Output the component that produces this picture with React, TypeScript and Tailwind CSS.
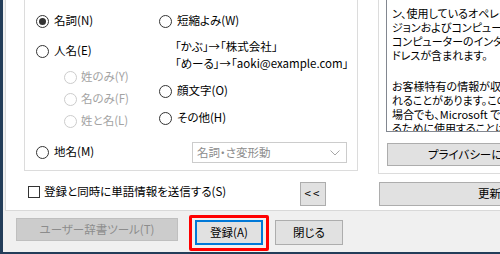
const FONT = "[font-family:'Noto_Sans_CJK_JP',sans-serif] [font-feature-settings:'palt']";

function Radio({ checked = false, disabled = false }: { checked?: boolean; disabled?: boolean }) {
  return (
    <span
      className={`flex items-center justify-center w-[13px] h-[13px] rounded-full border bg-white shrink-0 ${
        disabled ? 'border-[#cccccc]' : 'border-[#333333]'
      }`}
    >
      {checked && <span className="w-[7px] h-[7px] rounded-full bg-[#333333]" />}
    </span>
  );
}

function RadioItem({ label, checked, disabled, gap = 'gap-[5px]' }: { label: string; checked?: boolean; disabled?: boolean; gap?: string }) {
  return (
    <div className={`flex items-center h-[20px] ${gap}`}>
      <Radio checked={checked} disabled={disabled} />
      <span className={disabled ? 'text-[#a3a3a3]' : 'text-black'}>{label}</span>
    </div>
  );
}

export default function App() {
  return (
    <div className={`w-[500px] h-[254px] overflow-hidden flex flex-col bg-[#f0f0f0] text-[11.5px] leading-none ${FONT}`}>
      <div className="flex h-[252px]">
        {/* window frame */}
        <div className="w-[3px] bg-[#233d59] shrink-0" />

        <div className="flex flex-col flex-1 min-w-0">
          {/* tab page */}
          <div className="ml-[2px] h-[211px] w-[600px] bg-white border-l border-b border-[#d9d9d9] flex flex-col">
            <div className="flex items-start">
              {/* 品詞 group */}
              <div className="ml-[18px] w-[334px] h-[171px] border-x border-b border-[#dcdcdc] grid grid-cols-[134px_1fr]">
                <div className="pl-[11px] pt-[11px] flex flex-col">
                  <RadioItem label="名詞(N)" checked />
                  <div className="mt-[10px]">
                    <RadioItem label="人名(E)" />
                  </div>
                  <div className="pl-[28px] mt-[6px] flex flex-col gap-[2px]">
                    <RadioItem label="姓のみ(Y)" disabled gap="gap-[4px]" />
                    <RadioItem label="名のみ(F)" disabled gap="gap-[4px]" />
                    <RadioItem label="姓と名(L)" disabled gap="gap-[4px]" />
                  </div>
                  <div className="mt-[11px]">
                    <RadioItem label="地名(M)" />
                  </div>
                </div>
                <div className="pt-[11px] flex flex-col">
                  <RadioItem label="短縮よみ(W)" />
                  <div className="pl-[16px] mt-[7px] text-black">
                    <p className="h-[17px] flex items-center whitespace-nowrap">「かぶ」→「株式会社」</p>
                    <p className="h-[17px] flex items-center whitespace-nowrap">「めーる」→「aoki@example.com」</p>
                  </div>
                  <div className="mt-[9px]">
                    <RadioItem label="顔文字(O)" />
                  </div>
                  <div className="mt-[7px]">
                    <RadioItem label="その他(H)" />
                  </div>
                  <div className="ml-[33px] mt-[14px] w-[155px] h-[21px] border border-[#cccccc] bg-white flex items-center justify-between pl-[4px] pr-[6px]">
                    <span className="text-[#8c8c8c] whitespace-nowrap">名詞・さ変形動</span>
                    <svg width="10" height="6" viewBox="0 0 10 6" fill="none">
                      <path d="M0.5 0.5 L5 5 L9.5 0.5" stroke="#a8a8a8" strokeWidth="1" />
                    </svg>
                  </div>
                </div>
              </div>

              {/* privacy group */}
              <div className="ml-[20px] w-[200px] h-[174px] border-l border-b border-[#dcdcdc] flex flex-col">
                <div className="ml-[7px] w-[120px] h-[132px] border-l border-b border-[#828790] pl-[5px] pt-[6px] overflow-hidden leading-[14px] text-[11px] text-black whitespace-nowrap">
                  <p>ン、使用しているオペレー</p>
                  <p>ジョンおよびコンピューター</p>
                  <p>コンピューターのインターネ</p>
                  <p>ドレスが含まれます。</p>
                  <p className="mt-[17px]">お客様特有の情報が収</p>
                  <p>れることがあります。この</p>
                  <p>場合でも、Microsoft で</p>
                  <p>るために使用することは</p>
                </div>
                <button className="ml-[8px] mt-[11px] h-[23px] w-[190px] bg-[#e1e1e1] border border-[#adadad] flex items-center pl-[40px] text-black whitespace-nowrap">
                  プライバシーに関する声明
                </button>
              </div>
            </div>

            {/* send row */}
            <div className="mt-[8px] flex items-start h-[24px]">
              <div className="w-[294px] pl-[22px] h-[20px] flex items-center gap-[4px]">
                <span className="w-[12px] h-[12px] border border-[#333333] bg-white shrink-0" />
                <span className="text-black whitespace-nowrap">登録と同時に単語情報を送信する(S)</span>
              </div>
              <button className="w-[26px] h-[24px] bg-[#e1e1e1] border border-[#adadad] flex items-center justify-center text-black tracking-[2px]">
                {'<<'}
              </button>
              <button className="ml-[53px] w-[200px] h-[24px] bg-[#e1e1e1] border border-[#adadad] flex items-center pl-[98px] text-black whitespace-nowrap">
                更新(U)
              </button>
            </div>
          </div>

          {/* footer buttons */}
          <div className="flex items-start">
            <button className="ml-[13px] mt-[7px] w-[162px] h-[23px] bg-[#cccccc] border border-[#bfbfbf] flex items-center justify-center text-[#8c8c8c] whitespace-nowrap">
              ユーザー辞書ツール(T)
            </button>
            <div className="relative ml-[17px] mt-[9px]">
              <button className="w-[68px] h-[25px] bg-[#e1e1e1] border-2 border-[#0078d7] flex items-center justify-center text-black">
                登録(A)
              </button>
              <div className="absolute -left-[6px] -top-[5px] w-[80px] h-[36px] border-[3px] border-[#ff0000] rounded-[2px] pointer-events-none" />
            </div>
            <button className="ml-[12px] mt-[9px] w-[68px] h-[25px] bg-[#e1e1e1] border border-[#adadad] flex items-center justify-center text-black">
              閉じる
            </button>
          </div>
        </div>
      </div>
      <div className="h-[2px] bg-[#233d59]" />
    </div>
  );
}
